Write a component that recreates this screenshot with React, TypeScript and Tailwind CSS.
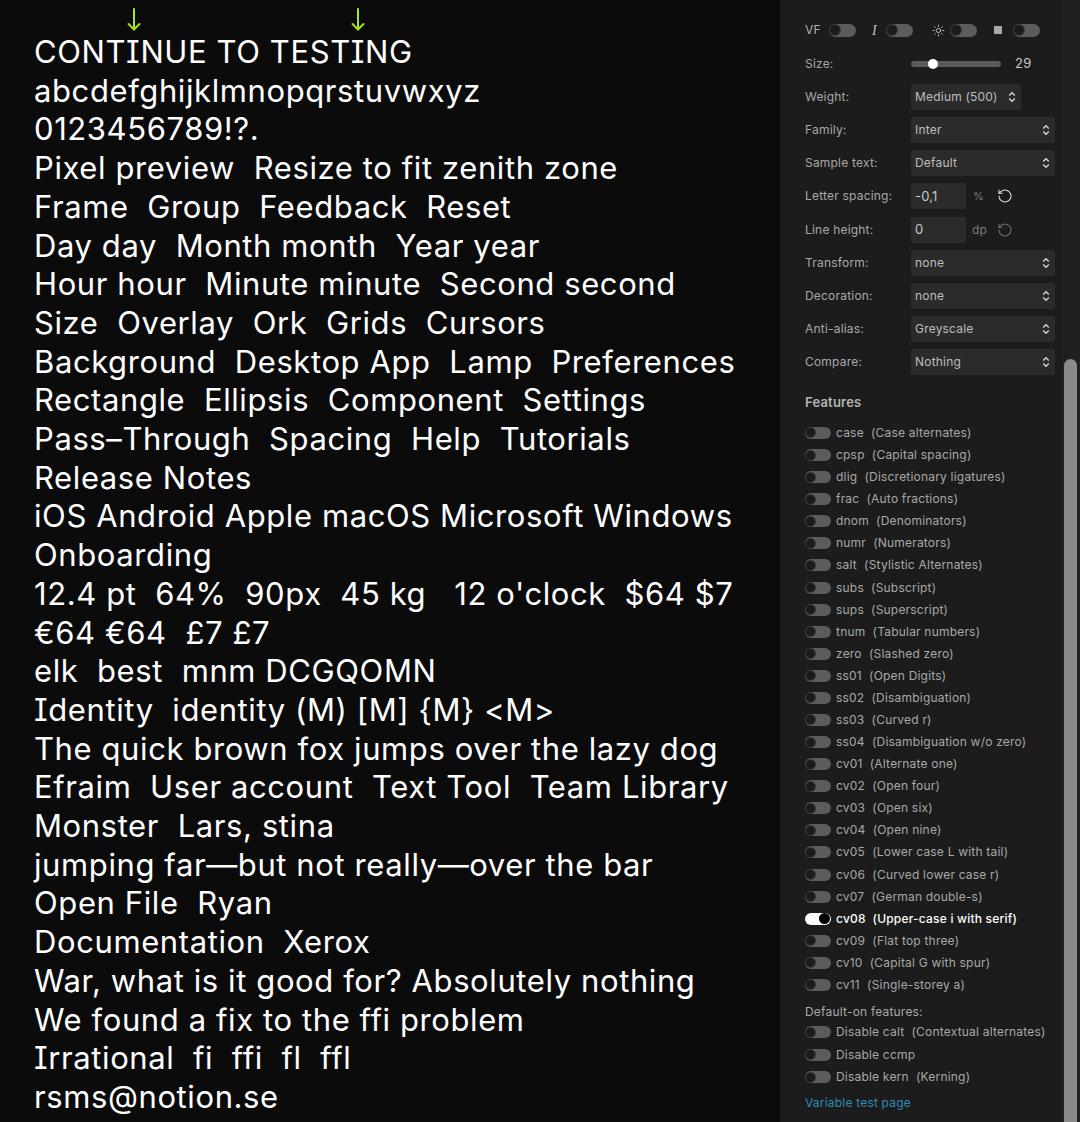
import React from "react";
import { RotateCcw, Sun } from "lucide-react";

const lines = [
  "CONTINUE TO TESTING",
  "abcdefghijklmnopqrstuvwxyz",
  "0123456789!?.",
  "Pixel preview  Resize to fit zenith zone",
  "Frame  Group  Feedback  Reset",
  "Day day  Month month  Year year",
  "Hour hour  Minute minute  Second second",
  "Size  Overlay  Ork  Grids  Cursors",
  "Background  Desktop App  Lamp  Preferences",
  "Rectangle  Ellipsis  Component  Settings",
  "Pass–Through  Spacing  Help  Tutorials",
  "Release Notes",
  "iOS Android Apple macOS Microsoft Windows",
  "Onboarding",
  "12.4 pt  64%  90px  45 kg   12 o'clock  $64 $7",
  "€64 €64  £7 £7",
  "elk  best  mnm DCGQOMN",
  "Identity  identity (M) [M] {M} <M>",
  "The quick brown fox jumps over the lazy dog",
  "Efraim  User account  Text Tool  Team Library",
  "Monster  Lars, stina",
  "jumping far—but not really—over the bar",
  "Open File  Ryan",
  "Documentation  Xerox",
  "War, what is it good for? Absolutely nothing",
  "We found a fix to the ffi problem",
  "Irrational  fi  ffi  fl  ffl",
  "rsms@notion.se",
];

const features: [string, string, boolean?][] = [
  ["case", "Case alternates"],
  ["cpsp", "Capital spacing"],
  ["dlig", "Discretionary ligatures"],
  ["frac", "Auto fractions"],
  ["dnom", "Denominators"],
  ["numr", "Numerators"],
  ["salt", "Stylistic Alternates"],
  ["subs", "Subscript"],
  ["sups", "Superscript"],
  ["tnum", "Tabular numbers"],
  ["zero", "Slashed zero"],
  ["ss01", "Open Digits"],
  ["ss02", "Disambiguation"],
  ["ss03", "Curved r"],
  ["ss04", "Disambiguation w/o zero"],
  ["cv01", "Alternate one"],
  ["cv02", "Open four"],
  ["cv03", "Open six"],
  ["cv04", "Open nine"],
  ["cv05", "Lower case L with tail"],
  ["cv06", "Curved lower case r"],
  ["cv07", "German double-s"],
  ["cv08", "Upper-case i with serif", true],
  ["cv09", "Flat top three"],
  ["cv10", "Capital G with spur"],
  ["cv11", "Single-storey a"],
];

function Toggle({ on = false, small = false }: { on?: boolean; small?: boolean }) {
  const size = small ? "w-[26px] h-[12px]" : "w-[27px] h-[13px]";
  const knob = small ? "w-[11px] h-[11px]" : "w-[12px] h-[12px]";
  return (
    <div
      className={`${size} rounded-full flex items-center shrink-0 ${
        on ? "bg-white justify-end pr-[1px]" : "bg-[#5c5c5c] justify-start"
      }`}
    >
      <div
        className={`${knob} rounded-full ${
          on ? "bg-black" : "bg-[#1c1c1c] border border-[#3a3a3a]"
        }`}
      />
    </div>
  );
}

function Chevrons() {
  return (
    <svg width="8" height="12" viewBox="0 0 8 12" fill="none" stroke="#d8d8d8" strokeWidth="1.3">
      <path d="M1.2 4.5 L4 1.7 L6.8 4.5" />
      <path d="M1.2 7.5 L4 10.3 L6.8 7.5" />
    </svg>
  );
}

function Select({ value, w = "w-[144px]" }: { value: string; w?: string }) {
  return (
    <div className={`${w} h-[26px] bg-[#2b2b2b] rounded-[2px] flex items-center justify-between pl-[4px] pr-[5px] text-[12px] text-[#bdbdbd]`}>
      <span>{value}</span>
      <Chevrons />
    </div>
  );
}

function Row({ label, children, extra = "" }: { label: string; children: React.ReactNode; extra?: string }) {
  return (
    <div className={`h-[26px] flex items-center ${extra}`}>
      <div className="w-[106px] text-[12px] text-[#a8a8a8]">{label}</div>
      {children}
    </div>
  );
}

export default function App() {
  return (
    <div className="w-[1080px] h-[1122px] flex overflow-hidden bg-[#0b0b0b] [font-family:Inter,'Noto_Sans',sans-serif]">
      {/* Left sample text */}
      <div className="relative w-[780px] shrink-0 pl-[34px] pt-[33px] text-white">
        <div className="absolute left-[127px] top-[8px]">
          <Arrow />
        </div>
        <div className="absolute left-[351px] top-[8px]">
          <Arrow />
        </div>
        <div className="text-[31px] leading-[38.7px] font-normal whitespace-pre tracking-[0.6px] [font-feature-settings:'cv08'_1]">
          {lines.map((l, i) => (
            <div key={i}>{l}</div>
          ))}
        </div>
      </div>

      {/* Right panel */}
      <div className="relative w-[300px] shrink-0 bg-[#1c1c1c] pl-[25px] pt-[17px] tracking-[0.2px]">
        <div className="flex flex-col gap-[7.1px]">
          <div className="h-[26px] flex items-center text-[12px] text-[#b0b0b0]">
            <span className="w-[24px]">VF</span>
            <Toggle />
            <span className="ml-[16px] w-[14px] text-[14px] italic [font-family:'Liberation_Serif',serif] text-[#c0c0c0]">I</span>
            <Toggle />
            <span className="ml-[19px] w-[18px] flex items-center">
              <Sun size={13} strokeWidth={1.6} color="#cfcfcf" />
            </span>
            <Toggle />
            <span className="ml-[17px] w-[19px] flex items-center">
              <span className="w-[8px] h-[8px] bg-[#a8a8a8] block" />
            </span>
            <Toggle />
          </div>
          <Row label="Size:" extra="mt-[1px]">
            <div className="w-[90px] h-[6px] rounded-full bg-[#5a5a5a] relative">
              <div className="absolute left-[17px] top-[-2px] w-[10px] h-[10px] rounded-full bg-white" />
            </div>
            <span className="ml-[14px] text-[13px] text-[#c8c8c8]">29</span>
          </Row>
          <Row label="Weight:">
            <Select value="Medium (500)" w="w-[110px]" />
          </Row>
          <Row label="Family:">
            <Select value="Inter" />
          </Row>
          <Row label="Sample text:">
            <Select value="Default" />
          </Row>
          <Row label="Letter spacing:">
            <div className="w-[55px] h-[26px] bg-[#2b2b2b] rounded-[2px] flex items-center pl-[4px] text-[13px] text-[#c8c8c8]">
              -0,1
            </div>
            <span className="ml-[7px] w-[24px] text-[11px] text-[#7c7c7c]">%</span>
            <RotateCcw size={16} strokeWidth={1.6} color="#dcdcdc" />
          </Row>
          <Row label="Line height:">
            <div className="w-[55px] h-[26px] bg-[#2b2b2b] rounded-[2px] flex items-center pl-[4px] text-[13px] text-[#c8c8c8]">
              0
            </div>
            <span className="ml-[6px] w-[25px] text-[12px] text-[#7c7c7c]">dp</span>
            <RotateCcw size={16} strokeWidth={1.6} color="#707070" />
          </Row>
          <Row label="Transform:">
            <Select value="none" />
          </Row>
          <Row label="Decoration:">
            <Select value="none" />
          </Row>
          <Row label="Anti-alias:">
            <Select value="Greyscale" />
          </Row>
          <Row label="Compare:">
            <Select value="Nothing" />
          </Row>
        </div>

        <div className="mt-[19px] text-[13px] leading-[16px] font-semibold text-[#b4b4b4]">Features</div>

        <div className="mt-[12px] flex flex-col">
          {features.map(([tag, desc, on]) => (
            <div key={tag} className="h-[22.08px] flex items-center">
              <Toggle on={!!on} small />
              <span
                className={`ml-[5px] text-[12px] whitespace-pre ${
                  on ? "text-white font-medium" : "text-[#a8a8a8]"
                }`}
              >
                {tag}  ({desc})
              </span>
            </div>
          ))}
        </div>

        <div className="mt-[8px] text-[12px] leading-[16px] text-[#a8a8a8]">Default-on features:</div>
        <div className="mt-[1px] flex flex-col">
          {[
            "Disable calt  (Contextual alternates)",
            "Disable ccmp",
            "Disable kern  (Kerning)",
          ].map((t) => (
            <div key={t} className="h-[22.5px] flex items-center">
              <Toggle small />
              <span className="ml-[5px] text-[12px] whitespace-pre text-[#a8a8a8]">{t}</span>
            </div>
          ))}
        </div>

        <div className="mt-[7px] text-[12px] leading-[16px] text-[#2f8ab8]">Variable test page</div>

        {/* scrollbar */}
        <div className="absolute right-0 top-0 bottom-0 w-[18px] bg-[#202020]" />
        <div className="absolute right-[3px] top-[359px] bottom-0 w-[13px] rounded-t-full bg-[#8a8a8a]" />
      </div>
    </div>
  );
}

function Arrow() {
  return (
    <svg width="14" height="23" viewBox="0 0 14 23" fill="none" stroke="#a6e22e" strokeWidth="2" strokeLinecap="round" strokeLinejoin="round">
      <path d="M7 1 L7 21.5" />
      <path d="M1.5 16 L7 21.5 L12.5 16" />
    </svg>
  );
}
